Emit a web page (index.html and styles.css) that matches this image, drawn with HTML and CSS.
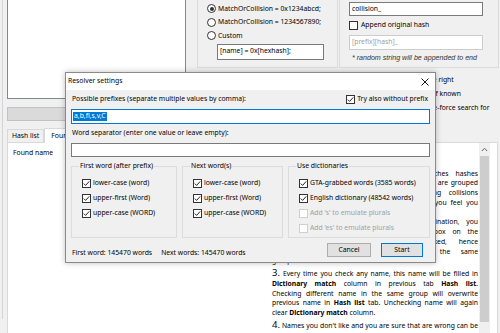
FILE: index.html
```html
<!DOCTYPE html>
<html>
<head>
<meta charset="utf-8">
<link rel="stylesheet" href="styles.css">
</head>
<body>
<div class="app">
  <div class="top">
    <div class="left-col">
      <div class="listbox"></div>
      <div class="bar"></div>
    </div>
    <div class="right-col">
      <div class="groups">
        <div class="grp grp-format">
          <div class="row"><span class="rb on"></span><span>MatchOrCollision = 0x1234abcd;</span></div>
          <div class="row"><span class="rb"></span><span>MatchOrCollision = 1234567890;</span></div>
          <div class="row"><span class="rb"></span><span>Custom</span></div>
          <div class="tb tb-custom">[name] = 0x[hexhash];</div>
        </div>
        <div class="grp grp-prefix">
          <div class="tb tb-prefix">collision_</div>
          <div class="row row-cb"><span class="cb"></span><span>Append original hash</span></div>
          <div class="tb tb-prefix tb-dis">[prefix][hash]_</div>
          <div class="note">* random string will be appended to end</div>
        </div>
      </div>
      <div class="opts">
        <div class="row"><span class="cb"></span><span>Show found names on the right</span></div>
        <div class="row"><span class="cb"></span><span>Show the original names if known</span></div>
        <div class="row"><span class="cb"></span><span>Use dictionaries and brute-force search for</span></div>
      </div>
    </div>
  </div>
  <div class="tabs">
    <div class="tabstrip">
      <span class="tab">Hash list</span>
      <span class="tab active">Found names</span>
    </div>
    <div class="tabpage">
      <div class="listview"><div class="lv-head">Found name</div></div>
      <div class="help">
        <div class="help-text">
          <p class="para">
            <span class="ln">1. Listed are all found names which matches hashes</span>
            <span class="ln">from Hash list tab. Names which belong together are grouped</span>
            <span class="ln">by hash they belong to, including colliding collisions</span>
            <span class="ln">of the hash. Check names that are correct or you feel you</span>
            <span class="ln last">are right.</span>
          </p>
          <p class="para">
            <span class="ln">2. If there is more than one valid combination, you</span>
            <span class="ln">can check each of them using the checkbox on the</span>
            <span class="ln">left. Only one name can be checked, hence</span>
            <span class="ln">the others will be unchecked if in the same</span>
            <span class="ln last">group.</span>
          </p>
          <p class="para big">
            <span class="ln"><span class="num">3.</span> Every time you check any name, this name will be filled in</span>
            <span class="ln"><b>Dictionary match</b> column in previous tab <b>Hash list</b>.</span>
            <span class="ln">Checking different name in the same group will overwrite</span>
            <span class="ln">previous name in <b>Hash list</b> tab. Unchecking name will again</span>
            <span class="ln last">clear <b>Dictionary match</b> column.</span>
          </p>
          <p class="para big">
            <span class="ln"><span class="num">4.</span> Names you don't like and you are sure that are wrong can be</span>
            <span class="ln last">hidden from the list by pressing Hide.</span>
          </p>
        </div>
        <div class="vscroll">
          <div class="arrow"><svg width="7" height="5" viewBox="0 0 7 5"><path d="M0.8 4 L3.5 1.3 L6.2 4" fill="none" stroke="#606060" stroke-width="1"/></svg></div>
          <div class="thumb"></div>
        </div>
      </div>
    </div>
  </div>
</div>

<div class="dialog">
  <div class="titlebar">
    <span class="title">Resolver settings</span>
    <span class="close"><svg width="8" height="8" viewBox="0 0 8 8"><path d="M0.5 0.5 L7.5 7.5 M7.5 0.5 L0.5 7.5" stroke="#000" stroke-width="0.9"/></svg></span>
  </div>
  <div class="dlg-body">
    <div class="lbl-row">
      <span class="lbl">Possible prefixes (separate multiple values by comma):</span>
      <span class="row"><span class="cb on"><svg width="7" height="7" viewBox="0 0 7 7"><path d="M0.8 3.6 L2.6 5.4 L6.2 1.4" fill="none" stroke="#222" stroke-width="1"/></svg></span><span>Try also without prefix</span></span>
    </div>
    <div class="tb tb-wide tb-focus"><span class="sel">a,b,fi,s,v,C</span></div>
    <div class="lbl-row"><span class="lbl">Word separator (enter one value or leave empty):</span></div>
    <div class="tb tb-wide tb-sep"></div>
    <div class="fgroups">
      <fieldset class="fg fg-first">
        <legend>First word (after prefix)</legend>
        <div class="row"><span class="cb on"><svg width="7" height="7" viewBox="0 0 7 7"><path d="M0.8 3.6 L2.6 5.4 L6.2 1.4" fill="none" stroke="#222" stroke-width="1"/></svg></span><span>lower-case (word)</span></div>
        <div class="row"><span class="cb on"><svg width="7" height="7" viewBox="0 0 7 7"><path d="M0.8 3.6 L2.6 5.4 L6.2 1.4" fill="none" stroke="#222" stroke-width="1"/></svg></span><span>upper-first (Word)</span></div>
        <div class="row"><span class="cb on"><svg width="7" height="7" viewBox="0 0 7 7"><path d="M0.8 3.6 L2.6 5.4 L6.2 1.4" fill="none" stroke="#222" stroke-width="1"/></svg></span><span>upper-case (WORD)</span></div>
      </fieldset>
      <fieldset class="fg fg-next">
        <legend>Next word(s)</legend>
        <div class="row"><span class="cb on"><svg width="7" height="7" viewBox="0 0 7 7"><path d="M0.8 3.6 L2.6 5.4 L6.2 1.4" fill="none" stroke="#222" stroke-width="1"/></svg></span><span>lower-case (word)</span></div>
        <div class="row"><span class="cb on"><svg width="7" height="7" viewBox="0 0 7 7"><path d="M0.8 3.6 L2.6 5.4 L6.2 1.4" fill="none" stroke="#222" stroke-width="1"/></svg></span><span>upper-first (Word)</span></div>
        <div class="row"><span class="cb on"><svg width="7" height="7" viewBox="0 0 7 7"><path d="M0.8 3.6 L2.6 5.4 L6.2 1.4" fill="none" stroke="#222" stroke-width="1"/></svg></span><span>upper-case (WORD)</span></div>
      </fieldset>
      <fieldset class="fg fg-dict">
        <legend>Use dictionaries</legend>
        <div class="row"><span class="cb on"><svg width="7" height="7" viewBox="0 0 7 7"><path d="M0.8 3.6 L2.6 5.4 L6.2 1.4" fill="none" stroke="#222" stroke-width="1"/></svg></span><span>GTA-grabbed words (3585 words)</span></div>
        <div class="row"><span class="cb on"><svg width="7" height="7" viewBox="0 0 7 7"><path d="M0.8 3.6 L2.6 5.4 L6.2 1.4" fill="none" stroke="#222" stroke-width="1"/></svg></span><span>English dictionary (48542 words)</span></div>
        <div class="row dis"><span class="cb"></span><span>Add 's' to emulate plurals</span></div>
        <div class="row dis"><span class="cb"></span><span>Add 'es' to emulate plurals</span></div>
      </fieldset>
    </div>
    <div class="dlg-foot">
      <span class="stat">First word: 145470 words</span>
      <span class="stat">Next words: 145470 words</span>
      <span class="btn btn-cancel">Cancel</span>
      <span class="btn btn-start">Start</span>
    </div>
  </div>
</div>
</body>
</html>
```
FILE: styles.css
```css
* { box-sizing: border-box; }
html, body { margin: 0; padding: 0; }
body {
  width: 500px; height: 333px; overflow: hidden; position: relative;
  background: #f0f0f0; color: #000;
  font-family: "Noto Sans", "DejaVu Sans", sans-serif; font-size: 6.8px; line-height: 1.2;
}
.app { margin-left: 2px; border-left: 1px solid #d4d4d4; padding-left: 4px; height: 333px; }

/* top area */
.top { display: flex; margin-top: -14px; }
.left-col { width: 179px; flex: none; }
.listbox { height: 113px; background: #fff; border: 1px solid #828790; }
.bar { margin-top: 8px; height: 14px; background: #dadada; border: 1px solid #c2c2c2; }
.right-col { margin-left: 11px; width: 302px; flex: none; }
.groups { display: flex; gap: 1px; }
.grp { border: 1px solid #dcdcdc; height: 82px; padding-top: 15px; padding-left: 9px; }
.grp-format { width: 141px; }
.grp-prefix { width: 160px; }
.row { display: flex; align-items: center; gap: 2px; height: 13.5px; white-space: nowrap; }
.rb { width: 9px; height: 9px; border: 1px solid #333; border-radius: 50%; background: #fff; flex: none; position: relative; }
.rb.on::after { content: ""; position: absolute; left: 1.5px; top: 1.5px; width: 4px; height: 4px; border-radius: 50%; background: #333; }
.cb { width: 9px; height: 9px; border: 1px solid #333; background: #fff; flex: none; display: flex; align-items: center; justify-content: center; }
.cb svg { display: block; }
.tb { background: #fff; border: 1px solid #7a7a7a; padding-left: 2px; display: flex; align-items: center; white-space: nowrap; }
.tb-custom { width: 107px; height: 16px; margin-left: 10px; margin-top: 1px; }
.tb-prefix { width: 134px; height: 14px; }
.row-cb { height: 19px; gap: 3px; }
.tb-dis { height: 15px; border-color: #cccccc; color: #a0a0a0; }
.note { font-family: "Liberation Sans", Arial, sans-serif; font-style: italic; font-size: 7.1px; color: #333; height: 17px; display: flex; align-items: center; padding-left: 3px; white-space: nowrap; }
.opts { margin-top: 5px; padding-left: 144px; }
.opts .row { height: 14px; gap: 3px; }

/* tabs */
.tabs { margin-top: 6px; }
.tabstrip { display: flex; align-items: flex-end; height: 15px; }
.tab { height: 13px; padding: 0 4px; border: 1px solid #d9d9d9; border-bottom: none; display: flex; align-items: center; background: #f0f0f0; }
.tab.active { height: 15px; background: #fff; padding: 0 6px; margin-bottom: -1px; position: relative; width: 60px; }
.tabpage { width: 491px; height: 200px; border: 1px solid #d9d9d9; background: #fff; display: flex; }
.listview { flex: 1; }
.lv-head { height: 20px; padding-left: 5px; display: flex; align-items: center; }
.help { width: 232px; flex: none; display: flex; padding-right: 7px; }
.help-text { flex: 1; padding: 25.5px 1px 0 7px; line-height: 9.75px; min-width: 0; }
.para { margin: 0; }
.para.big { margin-top: 3px; }
.ln { display: block; white-space: nowrap; text-align: justify; text-align-last: justify; }
.ln.last { text-align-last: left; }
.num { font-size: 9.5px; line-height: 0; }
.vscroll { width: 11px; flex: none; background: #f0f0f0; display: flex; flex-direction: column; height: 190px; }
.arrow { height: 13px; display: flex; align-items: center; justify-content: center; }
.thumb { margin: 0 1px; height: 166px; background: #cdcdcd; }

/* dialog */
.dialog {
  position: absolute; left: 65px; top: 72px; width: 371px; height: 191px;
  background: #f0f0f0; border: 1px solid #8a8a8a;
  box-shadow: 0 0 6px rgba(0,0,0,0.25);
}
.titlebar { height: 17px; background: #fff; display: flex; align-items: center; justify-content: space-between; padding-left: 2px; }
.close { width: 20px; height: 17px; display: flex; align-items: center; justify-content: center; }
.close svg { display: block; }
.dlg-body { padding: 0 5px 0 5px; }
.lbl-row { height: 19px; display: flex; align-items: center; justify-content: space-between; padding: 0 2px 0 1px; }
.lbl-row .row { gap: 2px; }
.tb-wide { width: 100%; }
.tb-focus { height: 15px; border-color: #0078d7; padding-left: 1px; }
.sel { background: #0078d7; color: #fff; padding: 0 1px; }
.tb-sep { height: 14px; }
.fgroups { display: flex; gap: 5px; margin-top: 4px; }
.fg { margin: 0; border: 1px solid #dcdcdc; padding: 5px 0 1px 10px; min-width: 0; }
.fg legend { padding: 0 1px; margin-left: -3px; line-height: 10px; }
.fg-first { width: 106px; flex: none; }
.fg-next { width: 101px; flex: none; }
.fg-dict { flex: 1; }
.fg .row { height: 15px; gap: 1px; }
.fg .row .cb + span { margin-left: 1px; }
.row.dis { color: #a0a0a0; }
.row.dis .cb { border-color: #cfcfcf; }
.dlg-foot { display: flex; align-items: center; margin-top: 5px; height: 14px; padding-left: 1px; }
.stat { padding-top: 6px; margin-right: 9px; }
.btn { height: 14px; display: flex; align-items: center; justify-content: center; background: #e1e1e1; border: 1px solid #adadad; }
.btn-cancel { width: 44px; margin-left: auto; }
.btn-start { width: 42px; margin-left: 10px; margin-right: 7px; border-color: #0078d7; }
```
